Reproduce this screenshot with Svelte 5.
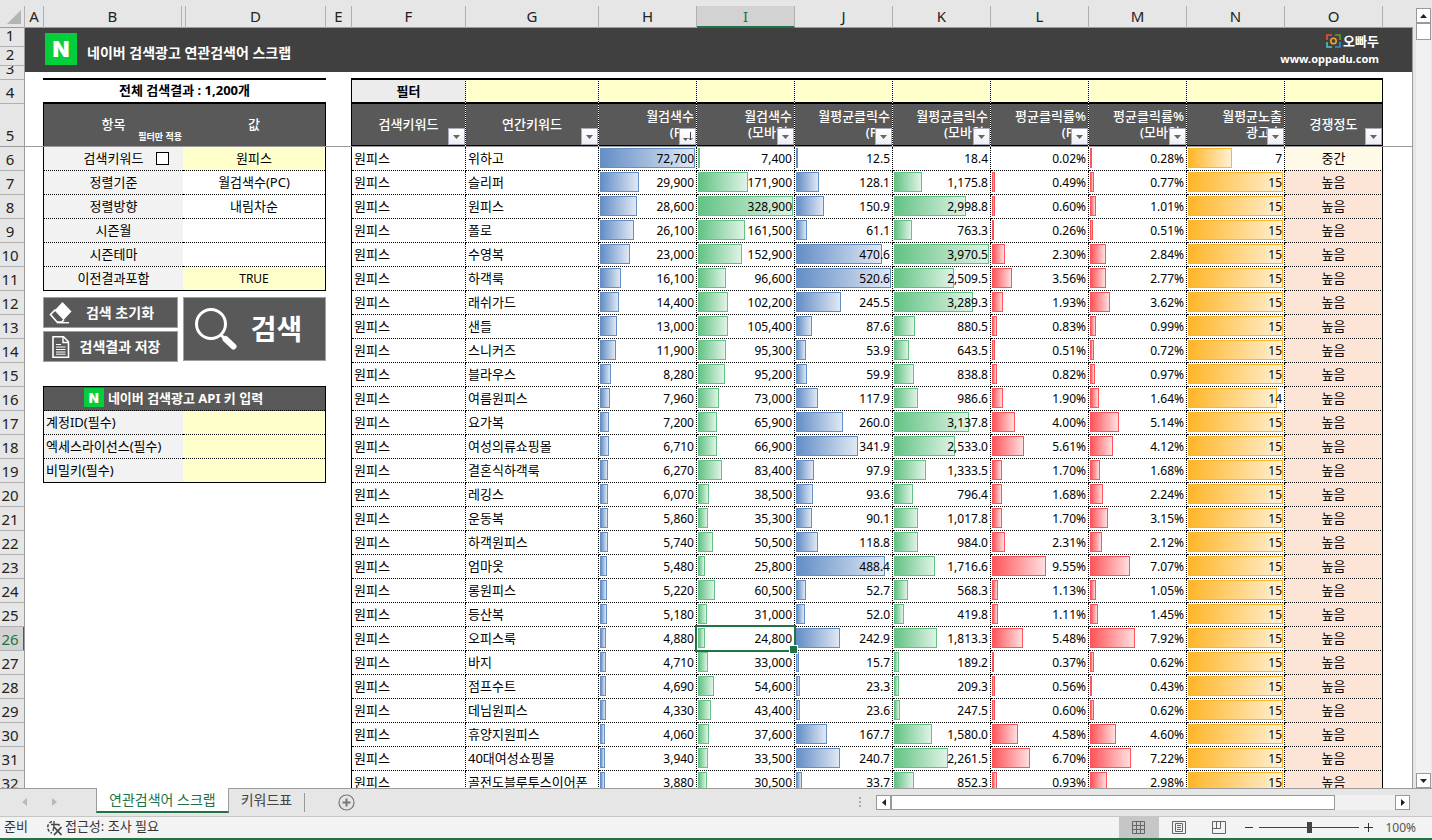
<script>
  let onlyFilter = $state(false);
  let zoom = $state(100);
  let activeTab = $state('연관검색어 스크랩');

  const letters = ['A', 'B', 'C', 'D', 'E', 'F', 'G', 'H', 'I', 'J', 'K', 'L', 'M', 'N', 'O'];
  const tabs = ['연관검색어 스크랩', '키워드표'];
  const sheetRows = Array.from({ length: 32 }, (_, i) => i + 1);

  const settings = [
    { name: '검색키워드', value: '원피스', input: true },
    { name: '정렬기준', value: '월검색수(PC)' },
    { name: '정렬방향', value: '내림차순' },
    { name: '시즌월', value: '' },
    { name: '시즌테마', value: '' },
    { name: '이전결과포함', value: 'TRUE', input: true }
  ];

  const apiKeys = [
    { id: 'account', name: '계정ID(필수)' },
    { id: 'license', name: '엑세스라이선스(필수)' },
    { id: 'secret', name: '비밀키(필수)' }
  ];

  const columns = [
    { title: ['검색키워드'] },
    { title: ['연간키워드'] },
    { title: ['월검색수', '(PC)'], color: 'blue', max: 72700, sorted: true },
    { title: ['월검색수', '(모바일)'], color: 'green', max: 328900 },
    { title: ['월평균클릭수', '(PC)'], color: 'blue', max: 520.6, digits: 1 },
    { title: ['월평균클릭수', '(모바일)'], color: 'green', max: 3970.5, digits: 1 },
    { title: ['평균클릭률%', '(PC)'], color: 'red', max: 16.8, digits: 2, unit: '%' },
    { title: ['평균클릭률%', '(모바일)'], color: 'red', max: 16.8, digits: 2, unit: '%' },
    { title: ['월평균노출', '광고수'], color: 'orange', max: 15 },
    { title: ['경쟁정도'] }
  ];
  const metrics = columns.slice(2, 9);

  const rows = [
    ['위하고', 72700, 7400, 12.5, 18.4, 0.02, 0.28, 7],
    ['슬리퍼', 29900, 171900, 128.1, 1175.8, 0.49, 0.77, 15],
    ['원피스', 28600, 328900, 150.9, 2998.8, 0.6, 1.01, 15],
    ['폴로', 26100, 161500, 61.1, 763.3, 0.26, 0.51, 15],
    ['수영복', 23000, 152900, 470.6, 3970.5, 2.3, 2.84, 15],
    ['하객룩', 16100, 96600, 520.6, 2509.5, 3.56, 2.77, 15],
    ['래쉬가드', 14400, 102200, 245.5, 3289.3, 1.93, 3.62, 15],
    ['샌들', 13000, 105400, 87.6, 880.5, 0.83, 0.99, 15],
    ['스니커즈', 11900, 95300, 53.9, 643.5, 0.51, 0.72, 15],
    ['블라우스', 8280, 95200, 59.9, 838.8, 0.82, 0.97, 15],
    ['여름원피스', 7960, 73000, 117.9, 986.6, 1.9, 1.64, 14],
    ['요가복', 7200, 65900, 260.0, 3137.8, 4.0, 5.14, 15],
    ['여성의류쇼핑몰', 6710, 66900, 341.9, 2533.0, 5.61, 4.12, 15],
    ['결혼식하객룩', 6270, 83400, 97.9, 1333.5, 1.7, 1.68, 15],
    ['레깅스', 6070, 38500, 93.6, 796.4, 1.68, 2.24, 15],
    ['운동복', 5860, 35300, 90.1, 1017.8, 1.7, 3.15, 15],
    ['하객원피스', 5740, 50500, 118.8, 984.0, 2.31, 2.12, 15],
    ['엄마옷', 5480, 25800, 488.4, 1716.6, 9.55, 7.07, 15],
    ['롱원피스', 5220, 60500, 52.7, 568.3, 1.13, 1.05, 15],
    ['등산복', 5180, 31000, 52.0, 419.8, 1.11, 1.45, 15],
    ['오피스룩', 4880, 24800, 242.9, 1813.3, 5.48, 7.92, 15],
    ['바지', 4710, 33000, 15.7, 189.2, 0.37, 0.62, 15],
    ['점프수트', 4690, 54600, 23.3, 209.3, 0.56, 0.43, 15],
    ['데님원피스', 4330, 43400, 23.6, 247.5, 0.6, 0.62, 15],
    ['휴양지원피스', 4060, 37600, 167.7, 1580.0, 4.58, 4.6, 15],
    ['40대여성쇼핑몰', 3940, 33500, 240.7, 2261.5, 6.7, 7.22, 15],
    ['골전도블루투스이어폰', 3880, 30500, 33.7, 852.3, 0.93, 2.98, 15]
  ];

  function format(value, col) {
    const digits = col.digits ?? 0;
    const text = value.toLocaleString('en-US', {
      minimumFractionDigits: digits,
      maximumFractionDigits: digits
    });
    return text + (col.unit ?? '');
  }

  function barWidth(value, col) {
    return (value / col.max) * 100;
  }
</script>

<div class="app">
  <div class="workbook">
    <div class="grid-area">
      <div class="col-heads">
        <div class="corner">
          <svg width="14" height="14" viewBox="0 0 14 14"><path d="M14 0v14H0z" fill="#b4b4b4" /></svg>
        </div>
        {#each letters as letter}
          <div class="col-head" class:selected={letter === 'I'}>{letter === 'C' ? '' : letter}</div>
        {/each}
        <div class="col-rest"></div>
      </div>

      <div class="grid-body">
        <div class="row-heads">
          {#each sheetRows as n}
            <div class="row-head r{n}" class:selected={n === 26}><span>{n}</span></div>
          {/each}
        </div>

        <main class="sheet">
          <header class="banner">
            <span class="naver">N</span>
            <h1>네이버 검색광고 연관검색어 스크랩</h1>
            <div class="brand">
              <div class="brand-name">
                <svg width="15" height="14" viewBox="0 0 15 14" fill="none" stroke-width="1.6">
                  <path d="M1 6V1h5" stroke="#f0502a" />
                  <path d="M9 1h5v5" stroke="#6a9a2a" />
                  <path d="M1 8v5h5" stroke="#5cc0c0" />
                  <path d="M9 13h5V8" stroke="#2a90e0" />
                  <circle cx="7.5" cy="7" r="2.7" stroke="#f5a623" />
                </svg>
                오빠두
              </div>
              <a href="#oppadu">www.oppadu.com</a>
            </div>
          </header>

          <div class="content">
            <aside class="panel">
              <div class="total">전체 검색결과 : 1,200개</div>
              <table class="settings">
                <colgroup>
                  <col class="c-name" />
                  <col />
                </colgroup>
                <thead>
                  <tr>
                    <th>항목<small>필터만 적용</small></th>
                    <th>값</th>
                  </tr>
                </thead>
                <tbody>
                  {#each settings as item, i}
                    <tr>
                      <td class="name">
                        {item.name}
                        {#if i === 0}
                          <input type="checkbox" aria-label="필터만 적용" bind:checked={onlyFilter} />
                        {/if}
                      </td>
                      <td class:input={item.input} class:latin={item.value === 'TRUE'}>{item.value}</td>
                    </tr>
                  {/each}
                </tbody>
              </table>

              <div class="actions">
                <div class="small-actions">
                  <button class="action">
                    <svg width="24" height="24" viewBox="0 0 24 24">
                      <path d="M13.500 1l9 9.500-8 8.500-9-9.500z" fill="#fff" />
                      <path d="M6.500 8.500L1.500 13.500l6.500 7.500h5l2-2.500" fill="none" stroke="#fff" stroke-width="1.700" />
                      <path d="M8 21.700h12" stroke="#fff" stroke-width="1.400" />
                    </svg>
                    <span>검색 초기화</span>
                  </button>
                  <button class="action">
                    <svg width="24" height="24" viewBox="0 0 24 24" fill="none" stroke="#fff">
                      <path d="M4 1.800h10.500l5 5v15.400H4z" stroke-width="1.600" />
                      <path d="M14 2v5.500h5.500" stroke-width="1.400" />
                      <path d="M7 9.500h5M7 12h9.500M7 14.500h9.500M7 17h9.500M7 19.200h9.500" />
                    </svg>
                    <span>검색결과 저장</span>
                  </button>
                </div>
                <button class="action big">
                  <svg width="44" height="44" viewBox="0 0 44 44" fill="none" stroke="#fff">
                    <circle cx="17" cy="17" r="14.500" stroke-width="3" />
                    <path d="M27 28l4 4" stroke-width="3" />
                    <path d="M31.500 32l8 7.500" stroke-width="6" stroke-linecap="round" />
                  </svg>
                  <span>검색</span>
                </button>
              </div>

              <table class="api">
                <colgroup>
                  <col class="c-name" />
                  <col />
                </colgroup>
                <thead>
                  <tr>
                    <th colspan="2">
                      <div class="api-title"><span class="naver mini">N</span>네이버 검색광고 API 키 입력</div>
                    </th>
                  </tr>
                </thead>
                <tbody>
                  {#each apiKeys as key}
                    <tr>
                      <td class="name"><label for={key.id}>{key.name}</label></td>
                      <td class="input"><input type="text" id={key.id} /></td>
                    </tr>
                  {/each}
                </tbody>
              </table>
            </aside>

            <table class="results">
              <colgroup>
                <col class="c-search" />
                <col class="c-keyword" />
                {#each columns.slice(2) as _}
                  <col class="c-metric" />
                {/each}
              </colgroup>
              <thead>
                <tr class="filters">
                  <th>필터</th>
                  {#each columns.slice(1) as col}
                    <td><input type="text" aria-label="{col.title.join('')} 필터" /></td>
                  {/each}
                </tr>
                <tr class="titles">
                  {#each columns as col}
                    <th class:metric={col.color}>
                      {#each col.title as line}<div>{line}</div>{/each}
                      <button class="filter-button" aria-label="{col.title.join('')} 정렬">
                        <svg width="15" height="15" viewBox="0 0 15 15">
                          {#if col.sorted}
                            <path d="M3 9h5l-2.500 3z" fill="#555" />
                            <path d="M10.500 3v8M8.500 9l2 2 2-2" fill="none" stroke="#444" />
                          {:else}
                            <path d="M4 6h7l-3.500 4z" fill="#666" />
                          {/if}
                        </svg>
                      </button>
                    </th>
                  {/each}
                </tr>
              </thead>
              <tbody>
                {#each rows as row, r}
                  <tr>
                    <td>원피스</td>
                    <td>{row[0]}</td>
                    {#each metrics as col, c}
                      <td class="num">
                        <div class="track">
                          {#if barWidth(row[c + 1], col) > 1}
                            <div class="bar {col.color}" style="width: {barWidth(row[c + 1], col)}%"></div>
                          {/if}
                        </div>
                        <span>{format(row[c + 1], col)}</span>
                        {#if r === 20 && c === 1}
                          <div class="selection"></div>
                        {/if}
                      </td>
                    {/each}
                    <td class="level" class:mid={r === 0}>{r === 0 ? '중간' : '높음'}</td>
                  </tr>
                {/each}
              </tbody>
            </table>
          </div>
          <div class="freeze-line"></div>
        </main>
      </div>
    </div>

    <div class="v-scroll">
      <button class="scroll-button" aria-label="위로">
        <svg width="7" height="4" viewBox="0 0 7 4"><path d="M0 4l3.500-4L7 4z" fill="#222" /></svg>
      </button>
      <div class="v-track"><div class="v-thumb"></div></div>
      <button class="scroll-button" aria-label="아래로">
        <svg width="7" height="4" viewBox="0 0 7 4"><path d="M0 0l3.500 4L7 0z" fill="#222" /></svg>
      </button>
    </div>
  </div>

  <nav class="tab-bar">
    <div class="tab-nav">
      <button aria-label="이전 시트">
        <svg width="5" height="8" viewBox="0 0 5 8"><path d="M5 0v8L0 4z" fill="#b9b9b9" /></svg>
      </button>
      <button aria-label="다음 시트">
        <svg width="5" height="8" viewBox="0 0 5 8"><path d="M0 0v8l5-4z" fill="#b9b9b9" /></svg>
      </button>
    </div>
    {#each tabs as tab}
      <button class="tab" class:active={tab === activeTab} onclick={() => (activeTab = tab)}>{tab}</button>
    {/each}
    <button class="add" aria-label="새 시트">
      <svg width="17" height="17" viewBox="0 0 17 17" fill="none" stroke="#777">
        <circle cx="8.500" cy="8.500" r="7.500" stroke-width="1.200" />
        <path d="M8.500 4.500v8M4.500 8.500h8" stroke-width="2" />
      </svg>
    </button>
    <div class="h-scroll">
      <svg class="grip" width="2" height="11" viewBox="0 0 2 11" fill="#aaa">
        <path d="M0 0h2v2H0zM0 4h2v2H0zM0 8h2v2H0z" />
      </svg>
      <button class="scroll-button" aria-label="왼쪽으로">
        <svg width="4" height="7" viewBox="0 0 4 7"><path d="M4 0v7L0 3.500z" fill="#222" /></svg>
      </button>
      <div class="h-track"><div class="h-thumb"></div></div>
      <button class="scroll-button" aria-label="오른쪽으로">
        <svg width="4" height="7" viewBox="0 0 4 7"><path d="M0 0v7l4-3.500z" fill="#222" /></svg>
      </button>
    </div>
  </nav>

  <footer class="status-bar">
    <span class="ready">준비</span>
    <svg width="17" height="16" viewBox="0 0 17 16" fill="none" stroke="#444">
      <path d="M6 1.500A6 6 0 0 0 6 13" stroke-width="1.500" stroke-dasharray="3 1.500" />
      <path d="M8 1v5M5 4.500h8M13 4v2M8 6l-1 5" stroke-width="1.300" />
      <path d="M8 7l7.500 8M15.500 7L8 15" stroke-width="1.800" />
    </svg>
    <span class="access">접근성: 조사 필요</span>
    <div class="status-right">
      <button class="view active" aria-label="기본">
        <svg width="14" height="14" viewBox="0 0 14 14" fill="none" stroke="#666">
          <path d="M.5 .5h12v12H.5zM.5 4.500h12M.5 8.500h12M4.500 .5v12M8.500 .5v12" />
        </svg>
      </button>
      <button class="view" aria-label="페이지 레이아웃">
        <svg width="14" height="14" viewBox="0 0 14 14" fill="none" stroke="#666">
          <path d="M.5 .5h13v12H.5zM3.500 2.500h7v8h-7zM5 4.500h4M5 6.500h4M5 8.500h4" />
        </svg>
      </button>
      <button class="view" aria-label="페이지 나누기 미리 보기">
        <svg width="14" height="14" viewBox="0 0 14 14" fill="none" stroke="#666">
          <path d="M.5 .5h13v12H.5zM4.500 .5v7M8.500 .5v7M.5 7.500h8" />
        </svg>
      </button>
      <button class="zoom-step" aria-label="축소" onclick={() => (zoom -= 10)}>
        <svg width="9" height="9" viewBox="0 0 9 9"><path d="M0 4.500h8" stroke="#333" /></svg>
      </button>
      <input class="zoom-slider" type="range" min="10" max="190" aria-label="확대/축소" bind:value={zoom} />
      <button class="zoom-step" aria-label="확대" onclick={() => (zoom += 10)}>
        <svg width="9" height="9" viewBox="0 0 9 9"><path d="M0 4.500h9M4.500 0v9" stroke="#333" /></svg>
      </button>
      <span class="zoom-value">{zoom}%</span>
    </div>
  </footer>
</div>

<style>
  :global(body) {
    margin: 0;
  }

  .app {
    display: flex;
    flex-direction: column;
    height: 100vh;
    overflow: hidden;
    background: #e6e6e6;
    color: #000;
    font-family: 'Noto Sans', 'Noto Sans CJK KR', sans-serif;
    font-size: 13px;
    line-height: 20px;
  }

  .app * {
    box-sizing: border-box;
  }

  button,
  input {
    font: inherit;
    color: inherit;
    margin: 0;
    padding: 0;
    border: none;
    background: none;
    border-radius: 0;
  }

  svg {
    display: block;
    flex: none;
  }

  .workbook {
    display: flex;
    flex: 1;
    min-height: 0;
  }

  .grid-area {
    display: flex;
    flex-direction: column;
    flex: 1;
    min-width: 0;
  }

  /* column letters */
  .col-heads {
    display: grid;
    grid-template-columns: 25px 19px 138px 4px 140px 26px 114px 133px repeat(8, 98px) 1fr;
    height: 28px;
    flex: none;
    padding-top: 6px;
    border-bottom: 1px solid #9b9b9b;
    font-size: 15px;
  }

  .corner,
  .col-head {
    border-right: 1px solid #b1b1b1;
  }

  .corner {
    padding: 4px 0 0 7px;
  }

  .col-head {
    text-align: center;
    color: #222;
  }

  .col-head.selected {
    background: #d2d2d2;
    color: #217346;
    height: 22px;
    border-bottom: 2px solid #217346;
  }

  .grid-body {
    display: flex;
    flex: 1;
    min-height: 0;
    overflow: hidden;
  }

  /* row numbers */
  .row-heads {
    width: 25px;
    flex: none;
    border-right: 1px solid #9b9b9b;
    font-size: 15px;
    line-height: 14px;
    color: #222;
  }

  .row-head {
    display: flex;
    align-items: flex-end;
    justify-content: center;
    height: 24px;
    padding: 0 4px 4px 0;
    border-bottom: 1px solid #b1b1b1;
    overflow: hidden;
  }

  .row-head.r1,
  .row-head.r2 {
    height: 19px;
  }

  .row-head.r3 {
    height: 14px;
  }

  .row-head.r5 {
    height: 43px;
    border-bottom-color: #9b9b9b;
  }

  .row-head.selected {
    background: #d2d2d2;
    color: #217346;
    box-shadow: inset -1px 0 #217346;
  }

  .sheet {
    position: relative;
    flex: 1;
    min-width: 0;
    background: #fff;
    border-right: 1px solid #9b9b9b;
  }

  .banner {
    display: flex;
    align-items: center;
    height: 44px;
    padding: 0 33px 0 20px;
    background: #404040;
    color: #fff;
  }

  .naver {
    display: flex;
    align-items: center;
    justify-content: center;
    width: 32px;
    height: 32px;
    margin-bottom: 2px;
    background: #03cf3d;
    color: #fff;
    font-family: Inter, 'Noto Sans', sans-serif;
    font-size: 22px;
    font-weight: 900;
  }

  .naver.mini {
    width: 20px;
    height: 19px;
    margin: 0 4px 0 0;
    font-size: 13px;
  }

  h1 {
    margin: 6px 0 0 10px;
    font-size: 14px;
    line-height: 20px;
    font-weight: 700;
  }

  .brand {
    margin-left: auto;
    text-align: right;
    font-weight: 700;
    line-height: 18px;
  }

  .brand-name {
    display: flex;
    align-items: center;
    justify-content: flex-end;
    gap: 2px;
  }

  .brand a {
    display: block;
    color: #fff;
    font-size: 11px;
    text-decoration: none;
  }

  .content {
    display: flex;
    align-items: flex-start;
    gap: 25px;
    padding: 6px 0 0 18px;
  }

  .panel {
    width: 283px;
    flex: none;
  }

  .total {
    height: 26px;
    border-top: 2px solid #000;
    border-bottom: 2px solid #000;
    text-align: center;
    font-weight: 700;
  }

  table {
    border-spacing: 0;
    table-layout: fixed;
  }

  th,
  td {
    position: relative;
    height: 24px;
    padding: 0 0 2px;
    white-space: nowrap;
    background-clip: padding-box;
  }

  th {
    font-weight: 500;
  }

  .settings,
  .api {
    width: 100%;
    border: 1px solid #000;
  }

  .settings {
    border-top: none;
  }

  .settings th {
    height: 43px;
    padding-bottom: 4px;
    background: #595959;
    color: #fff;
  }

  .c-name {
    width: 139px;
  }

  .settings small {
    position: absolute;
    right: 1px;
    bottom: 4px;
    font-size: 9px;
    line-height: 12px;
    font-weight: 700;
  }

  .settings td,
  .api td {
    border-bottom: 1px dotted #000;
  }

  .settings tr:last-child td,
  .api tr:last-child td {
    height: 23px;
    border-bottom: none;
  }

  .settings td {
    text-align: center;
  }

  td.name {
    background-color: #f2f2f2;
  }

  td.input {
    background-color: #ffffcc;
  }

  .settings td.latin {
    padding-bottom: 0;
    font-size: 12px;
  }

  .settings input {
    position: absolute;
    top: 5px;
    right: 14px;
    width: 13px;
    height: 13px;
    appearance: none;
    border: 1px solid #000;
    background: #fff;
  }

  .settings input:checked {
    background: #595959;
  }

  .actions {
    display: flex;
    align-items: flex-start;
    gap: 5px;
    margin-top: 6px;
  }

  .small-actions {
    display: flex;
    flex-direction: column;
    gap: 3px;
    width: 135px;
  }

  .action {
    display: flex;
    align-items: center;
    height: 31px;
    padding-left: 5px;
    border: 1px solid #a0a0a0;
    background: #595959;
    color: #fff;
    font-size: 14px;
    font-weight: 700;
  }

  .action span {
    flex: 1;
    padding-right: 10px;
    text-align: center;
  }

  .action.big {
    flex: 1;
    height: 64px;
    padding-left: 10px;
    font-size: 28px;
  }

  .api {
    margin-top: 24px;
  }

  .api th {
    height: 24px;
    background: #595959;
    color: #fff;
    font-weight: 700;
    border-bottom: 1px dotted #000;
  }

  .api-title {
    display: flex;
    align-items: center;
    justify-content: center;
    padding-right: 22px;
  }

  .api label {
    padding-left: 2px;
  }

  .api td.input {
    padding-bottom: 0;
  }

  .api input,
  .filters input {
    display: block;
    width: 100%;
    height: 22px;
    padding: 0 3px;
  }

  /* keyword results */
  .results {
    width: 1032px;
    flex: none;
    border-left: 1px solid #000;
  }

  .c-search {
    width: 114px;
  }

  .c-keyword {
    width: 133px;
  }

  .c-metric {
    width: 98px;
  }

  .results td,
  .results th {
    border-right: 1px dotted #000;
    border-bottom: 1px dotted #000;
  }

  .results tr > :last-child {
    border-right-style: solid;
  }

  .results tbody td {
    padding-left: 2px;
  }

  .results .filters > * {
    height: 26px;
    padding: 0;
    border-top: 2px solid #000;
    border-bottom: 2px solid #000;
    background-color: #ffffcc;
  }

  .results .filters th {
    background-color: #ececec;
    font-weight: 700;
  }

  .results .titles th {
    height: 43px;
    border-bottom: 2px solid #000;
    background-color: #595959;
    color: #fff;
    line-height: 16px;
  }

  .titles th.metric {
    padding-right: 2px;
    text-align: right;
  }

  .filter-button {
    position: absolute;
    right: 0;
    bottom: 0;
    width: 17px;
    height: 17px;
    border: 1px solid #a8acb8;
    background: linear-gradient(#fff, #eceef4);
  }

  .results .num {
    padding: 0 2px 0 0;
    text-align: right;
    font-size: 12px;
  }

  .num span {
    position: relative;
  }

  .track {
    position: absolute;
    inset: 1px 1px 2px 1px;
  }

  .bar {
    height: 100%;
    min-width: 2px;
    border: 1px solid;
  }

  .bar.blue {
    border-color: #638ec6;
    background: linear-gradient(to right, #638ec6, #e0e8f4);
  }

  .bar.green {
    border-color: #63c384;
    background: linear-gradient(to right, #63c384, #e0f3e6);
  }

  .bar.red {
    border-color: #ff555a;
    background: linear-gradient(to right, #ff555a, #ffdedf);
  }

  .bar.orange {
    border-color: #ffb628;
    background: linear-gradient(to right, #ffb628, #fff0d4);
  }

  .selection {
    position: absolute;
    inset: -2px;
    z-index: 1;
    border: 2px solid #217346;
  }

  .selection::after {
    content: '';
    position: absolute;
    right: -4px;
    bottom: -4px;
    width: 7px;
    height: 7px;
    border: 1px solid #fff;
    background: #217346;
  }

  .results .level {
    padding-left: 0;
    text-align: center;
    background-color: #fce4d6;
  }

  .results .level.mid {
    background-color: #fff9e7;
  }

  .freeze-line {
    position: absolute;
    top: 118px;
    left: 0;
    right: 0;
    height: 1px;
    background: #9b9b9b;
  }

  /* scroll bars */
  .v-scroll {
    display: flex;
    flex-direction: column;
    width: 19px;
    padding: 8px 1px 0 3px;
  }

  .scroll-button {
    display: flex;
    align-items: center;
    justify-content: center;
    flex: none;
    width: 15px;
    height: 15px;
    border: 1px solid #999;
    background: #fff;
  }

  .v-track {
    flex: 1;
    background: #f1f1f1;
  }

  .v-thumb {
    width: 15px;
    height: 17px;
    border: 1px solid #999;
    background: #fff;
  }

  .tab-bar {
    display: flex;
    align-items: flex-start;
    height: 28px;
    flex: none;
    border-top: 1px solid #9b9b9b;
    color: #444;
    font-size: 14px;
  }

  .tab-nav {
    display: flex;
    justify-content: space-between;
    width: 96px;
    padding: 9px 39px 0 22px;
  }

  .tab {
    height: 22px;
    padding: 0 12px;
  }

  .tab.active {
    height: 25px;
    margin-top: -1px;
    border-left: 1px solid #9b9b9b;
    border-right: 1px solid #9b9b9b;
    border-bottom: 2px solid #217346;
    background: #fff;
    color: #217346;
  }

  .add {
    height: 19px;
    margin-top: 4px;
    padding-left: 33px;
    border-left: 1px solid #999;
  }

  .h-scroll {
    display: flex;
    align-items: center;
    flex: 0 0 551px;
    margin: 6px 22px 0 auto;
  }

  .grip {
    margin-right: 15px;
  }

  .h-track {
    flex: 1;
    height: 15px;
    background: #f1f1f1;
  }

  .h-thumb {
    width: 88%;
    height: 15px;
    border: 1px solid #999;
    background: #fff;
  }

  .status-bar {
    display: flex;
    align-items: center;
    height: 24px;
    flex: none;
    padding-left: 4px;
    border-top: 1px solid #c6c6c6;
    border-bottom: 2px solid #217346;
    background: #f3f3f3;
    color: #333;
  }

  .ready,
  .access {
    padding-bottom: 3px;
  }

  .ready {
    margin-right: 18px;
  }

  .access {
    margin-left: 2px;
  }

  .status-right {
    display: flex;
    align-items: center;
    height: 100%;
    margin-left: auto;
    padding-right: 16px;
  }

  .view {
    display: flex;
    align-items: center;
    justify-content: center;
    width: 40px;
    height: 100%;
  }

  .view.active {
    background: #c6c6c6;
  }

  .zoom-step {
    width: 9px;
  }

  .view + .zoom-step {
    margin-left: 6px;
  }

  .zoom-slider {
    width: 100px;
    height: 12px;
    margin: 0 5px;
    appearance: none;
    background: linear-gradient(#444, #444) center / 100% 1px no-repeat;
  }

  .zoom-slider::-webkit-slider-thumb {
    appearance: none;
    width: 5px;
    height: 11px;
    background: #444;
  }

  .zoom-value {
    margin-left: 12px;
    font-size: 12px;
    color: #555;
  }
</style>
